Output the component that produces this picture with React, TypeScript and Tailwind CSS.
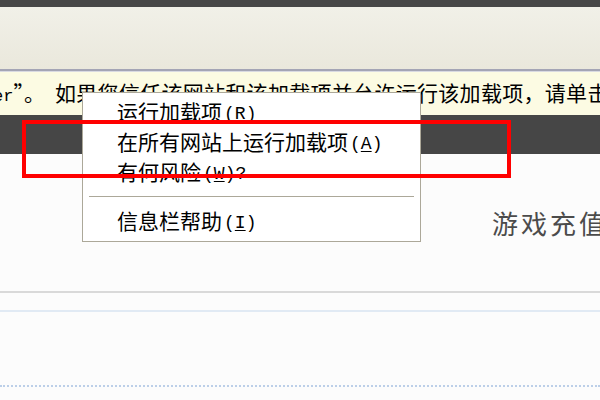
import React from "react";

const CJK = "font-['Noto_Sans_CJK_SC',sans-serif]";
const MONO = "font-['Liberation_Mono',monospace]";

type MenuItem = { label: string; key: string; suffix?: string };

const MENU_TOP: MenuItem[] = [
  { label: "运行加载项", key: "R" },
  { label: "在所有网站上运行加载项", key: "A" },
  { label: "有何风险", key: "W", suffix: "?" },
];

const MENU_BOTTOM: MenuItem[] = [{ label: "信息栏帮助", key: "I" }];

function MenuRow({ item }: { item: MenuItem }) {
  return (
    <div className="flex h-[30px] items-center whitespace-nowrap pl-[34px] text-black">
      <span className="text-[21px] leading-none">
        <span className={CJK}>{item.label}</span>
        <span className={`${MONO} relative -top-[1px] ml-[2px] text-[18px]`}>
          (<span className="underline underline-offset-2">{item.key}</span>)
          {item.suffix}
        </span>
      </span>
    </div>
  );
}

export default function App() {
  return (
    <div className="relative flex h-[400px] w-[600px] flex-col overflow-hidden bg-[#fcfcfc]">
      {/* window chrome */}
      <div className="h-[7px] bg-[#474747]" />
      <div className="h-[62px] bg-gradient-to-b from-[#f1f0e8] to-[#eae8dc]" />
      <div className="h-[3px] border-t-2 border-[#a4a5b5] bg-[#d9dae2]" />

      {/* information bar */}
      <div className="flex h-[43px] items-center whitespace-nowrap bg-[#fcfbe3] text-black">
        <span className="text-[21px] leading-none">
          <span className={`${MONO} -ml-[7px] text-[17px]`}>er</span>
          <span className={CJK}>”。</span>
          <span className={`${CJK} ml-[10px] tracking-[0.3px]`}>
            如果您信任该网站和该加载项并允许运行该加载项，请单击此处
          </span>
        </span>
      </div>

      <div className="h-[39px] bg-[#464646]" />

      {/* page */}
      <div className="flex flex-1 flex-col">
        <div className={`${CJK} mt-[54px] h-[30px] whitespace-nowrap pl-[492px] text-[26px] leading-[30px] tracking-[3px] text-[#4b4b4b]`}>
          游戏充值中心
        </div>
        <div className="mt-[53px] h-[2px] bg-[#d9d9d9]" />
        <div className="mt-[17px] h-[2px] bg-[#e1eaf4]" />
        <div className="mt-[73px] border-t-2 border-dotted border-[#bccfe8]" />
      </div>

      {/* context menu */}
      <div className="absolute left-[82px] top-[92px] w-[339px] border border-[#aca899] bg-white pb-[5px] pt-[4px]">
        {MENU_TOP.map((item) => (
          <MenuRow key={item.key} item={item} />
        ))}
        <div className="mx-[6px] my-[9px] h-px bg-[#aca899]" />
        {MENU_BOTTOM.map((item) => (
          <MenuRow key={item.key} item={item} />
        ))}
      </div>

      {/* highlight */}
      <div className="absolute left-[22px] top-[120px] h-[58px] w-[489px] border-4 border-[#ff0000]" />
    </div>
  );
}
